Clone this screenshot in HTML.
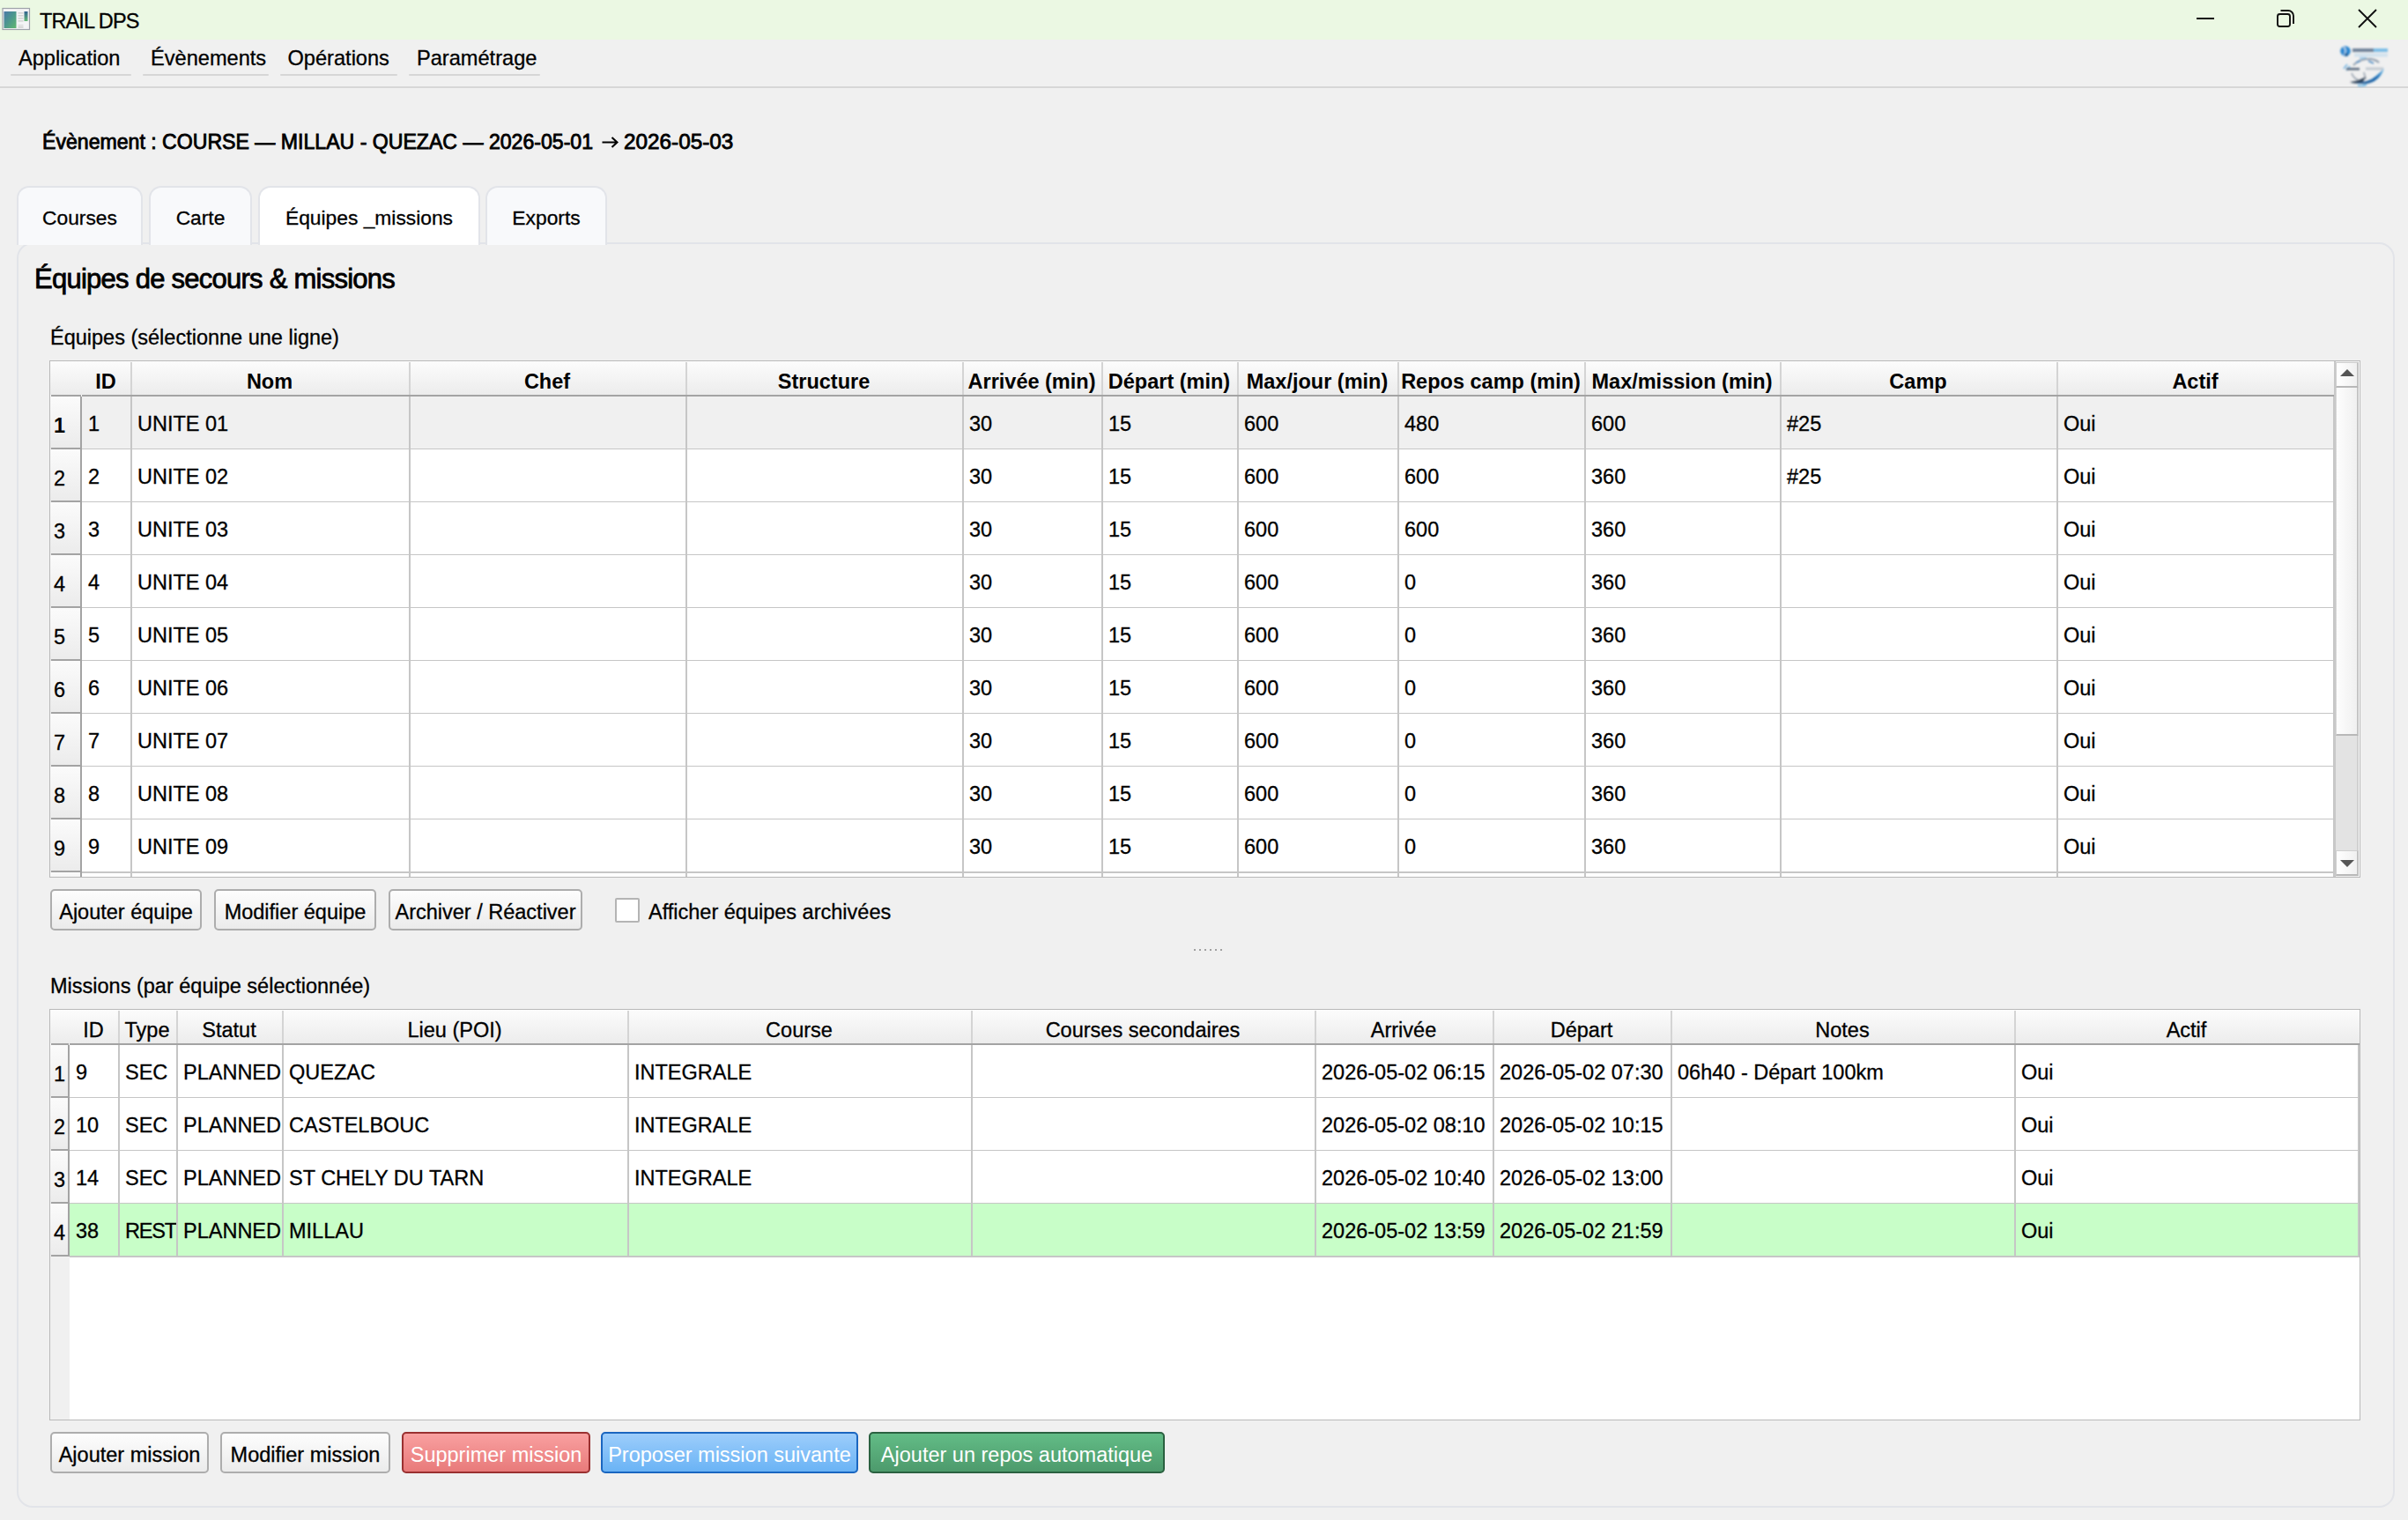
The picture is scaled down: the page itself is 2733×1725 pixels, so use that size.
<!DOCTYPE html>
<html><head><meta charset="utf-8"><title>TRAIL DPS</title>
<style>
html,body{margin:0;padding:0;}
body{width:2733px;height:1725px;overflow:hidden;background:#f0f0f0;position:relative;font-family:"Liberation Sans",sans-serif;}
.t{position:absolute;white-space:nowrap;line-height:1;-webkit-text-stroke-width:0.3px;}
.r{position:absolute;box-sizing:border-box;}
</style></head><body>

<div class="r" style="left:0px;top:0px;width:2733px;height:45px;background:#ebf8e3;"></div>
<svg style="position:absolute;left:2px;top:8px" width="33" height="27" viewBox="0 0 33 27">
<defs><linearGradient id="ig" x1="0" y1="0" x2="1" y2="1"><stop offset="0" stop-color="#4a78a8"/><stop offset="0.45" stop-color="#4b9590"/><stop offset="1" stop-color="#62b870"/></linearGradient>
<linearGradient id="ig2" x1="0" y1="0" x2="0" y2="1"><stop offset="0" stop-color="#2f6090"/><stop offset="1" stop-color="#66bb77"/></linearGradient></defs>
<rect x="1" y="1.5" width="30.5" height="24" fill="#f4f4f6" stroke="#9ea2aa" stroke-width="1.2"/>
<rect x="2.5" y="5" width="14" height="19" fill="url(#ig)"/>
<rect x="18.5" y="6" width="6" height="1.6" fill="#d4d4d4"/>
<rect x="18.5" y="9" width="6" height="1.6" fill="#d4d4d4"/>
<rect x="18.5" y="12" width="6" height="1.6" fill="#d4d4d4"/>
<rect x="18.5" y="15" width="6" height="1.6" fill="#d4d4d4"/>
<rect x="18.5" y="20" width="6" height="1.2" fill="#d8d8d8"/>
<rect x="18.5" y="22" width="6" height="1.6" fill="#d0d0d0"/>
<rect x="25.5" y="5" width="4" height="11" fill="url(#ig2)"/>
</svg>
<div class="t" style="left:45px;top:13.11px;font-size:23.5px;font-weight:400;color:#000;letter-spacing:-0.9px;">TRAIL DPS</div>
<svg style="position:absolute;left:2480px;top:0px" width="253" height="45" viewBox="0 0 253 45">
<rect x="13" y="20" width="20" height="2" fill="#111"/>
<rect x="105" y="16" width="14" height="14" rx="2.5" fill="none" stroke="#111" stroke-width="1.9"/>
<path d="M108.5 12 H117 A6 6 0 0 1 123 18 V27" fill="none" stroke="#111" stroke-width="1.9"/>
<path d="M197 11 L217 31 M217 11 L197 31" stroke="#111" stroke-width="1.9"/>
</svg>
<div class="t" style="left:21px;top:54.52px;font-size:23.6px;font-weight:400;color:#000;">Application</div>
<div class="r" style="left:12px;top:84px;width:137px;height:2px;background:#d6d6d6;border-radius:1px;"></div>
<div class="t" style="left:171px;top:54.52px;font-size:23.6px;font-weight:400;color:#000;">Évènements</div>
<div class="r" style="left:162px;top:84px;width:143px;height:2px;background:#d6d6d6;border-radius:1px;"></div>
<div class="t" style="left:326.5px;top:54.52px;font-size:23.6px;font-weight:400;color:#000;">Opérations</div>
<div class="r" style="left:318px;top:84px;width:133px;height:2px;background:#d6d6d6;border-radius:1px;"></div>
<div class="t" style="left:473px;top:54.52px;font-size:23.6px;font-weight:400;color:#000;">Paramétrage</div>
<div class="r" style="left:464px;top:84px;width:149px;height:2px;background:#d6d6d6;border-radius:1px;"></div>
<div class="r" style="left:0px;top:98px;width:2733px;height:2px;background:#d7d7d7;"></div>
<svg style="position:absolute;left:2650px;top:45px" width="70" height="55" viewBox="0 0 70 55">
<defs><filter id="bl" x="-20%" y="-20%" width="140%" height="140%"><feGaussianBlur stdDeviation="0.9"/></filter>
<linearGradient id="sw" x1="0" y1="1" x2="1" y2="0"><stop offset="0" stop-color="#1d4f86"/><stop offset="0.6" stop-color="#1f6fb8"/><stop offset="1" stop-color="#6cc4f0"/></linearGradient></defs>
<g filter="url(#bl)">
<circle cx="12" cy="13" r="5.8" fill="#2a88d0"/>
<path d="M10 8.5 q4 3 0.5 9" stroke="#d8ecf8" stroke-width="1.3" fill="none"/>
<circle cx="13" cy="17" r="2" fill="#1b5c95"/>
<rect x="20" y="10" width="24" height="4" fill="#71839a"/>
<rect x="44" y="10" width="16" height="4" fill="#7cbde6"/>
<rect x="22" y="15.5" width="38" height="4" fill="#d2e2ee"/>
<rect x="28" y="20" width="8" height="1.6" fill="#8cc4ea"/>
<path d="M21 29 q8 -8 20 -7 q6 1 9 4" stroke="#8a98a8" stroke-width="1.8" fill="none"/>
<path d="M24 26 l5 -2 M38 24 l6 3" stroke="#4a88c0" stroke-width="1.6"/>
<path d="M10 33 l4 -5 M13 35 l4 -5" stroke="#6aaee0" stroke-width="1.5"/>
<rect x="13" y="32" width="15" height="2.6" fill="#5a6a7e"/>
<rect x="35" y="31.5" width="20" height="3" fill="#c4cad2"/>
<path d="M19 38 q2 6 8 8 M33 37 l2 8" stroke="#9aa4b0" stroke-width="1.6" fill="none"/>
<path d="M17 48 q10 -1 18 -6 l-3 6 q-8 3 -15 0z" fill="#2f4256"/>
<path d="M22 49 q16 0 25 -8 q6 -5 9 -9 q-3 10 -11 15 q-8 5 -23 2z" fill="url(#sw)"/>
<path d="M26 52 q6 1 10 -1" stroke="#4aa6e0" stroke-width="1.4" fill="none"/>
</g>
</svg>
<div class="t" style="left:48px;top:150.45px;font-size:23.1px;font-weight:400;color:#000;-webkit-text-stroke:0.85px #000;">Évènement : COURSE — MILLAU - QUEZAC — 2026-05-01</div>
<svg style="position:absolute;left:683px;top:155px" width="19" height="13" viewBox="0 0 19 13"><path d="M0.5 6.5 H17 M11.5 1 L17.5 6.5 L11.5 12" fill="none" stroke="#000" stroke-width="2.1"/></svg>
<div class="t" style="left:708px;top:149.43px;font-size:24.3px;font-weight:400;color:#000;-webkit-text-stroke:0.85px #000;">2026-05-03</div>
<div class="r" style="left:19px;top:275px;width:2699px;height:1436px;border:2px solid #e2e4e9;border-radius:18px;background:#f0f0f0;"></div>
<div class="r" style="left:19px;top:211px;width:143px;height:67px;border:2px solid #e2e4e9;border-bottom:none;border-top-left-radius:14px;border-top-right-radius:14px;background:#f8f9fb;"></div>
<div class="t" style="left:19px;width:143px;text-align:center;top:236.20px;font-size:22.8px;font-weight:400;color:#000;">Courses</div>
<div class="r" style="left:169px;top:211px;width:117px;height:67px;border:2px solid #e2e4e9;border-bottom:none;border-top-left-radius:14px;border-top-right-radius:14px;background:#f8f9fb;"></div>
<div class="t" style="left:169px;width:117px;text-align:center;top:236.20px;font-size:22.8px;font-weight:400;color:#000;">Carte</div>
<div class="r" style="left:293px;top:211px;width:252px;height:67px;border:2px solid #e2e4e9;border-bottom:none;border-top-left-radius:14px;border-top-right-radius:14px;background:#ffffff;"></div>
<div class="t" style="left:293px;width:252px;text-align:center;top:236.20px;font-size:22.8px;font-weight:400;color:#000;">Équipes _missions</div>
<div class="r" style="left:551px;top:211px;width:138px;height:67px;border:2px solid #e2e4e9;border-bottom:none;border-top-left-radius:14px;border-top-right-radius:14px;background:#f8f9fb;"></div>
<div class="t" style="left:551px;width:138px;text-align:center;top:236.20px;font-size:22.8px;font-weight:400;color:#000;">Exports</div>
<div class="t" style="left:39px;top:301.26px;font-size:31px;font-weight:400;color:#000;-webkit-text-stroke:0.8px #000;letter-spacing:-0.75px;">Équipes de secours &amp; missions</div>
<div class="t" style="left:57px;top:371.61px;font-size:23.5px;font-weight:400;color:#000;">Équipes (sélectionne une ligne)</div>
<div class="r" style="left:56px;top:409px;width:2623px;height:587px;border:1px solid #b9b9b9;background:#ffffff;"></div>
<div class="r" style="left:57px;top:410px;width:2592px;height:38px;background:linear-gradient(#fcfcfc,#ececec);"></div>
<div class="r" style="left:58px;top:448px;width:34px;height:2px;background:#a3a3a3;"></div>
<div class="r" style="left:93px;top:448px;width:2556px;height:2px;background:#a3a3a3;"></div>
<div class="t" style="left:92px;width:56px;text-align:center;top:422.11px;font-size:23.5px;font-weight:700;color:#000;-webkit-text-stroke-width:0;">ID</div>
<div class="r" style="left:148px;top:411px;width:2px;height:37px;background:#d4d4d4;"></div>
<div class="t" style="left:148px;width:316px;text-align:center;top:422.11px;font-size:23.5px;font-weight:700;color:#000;-webkit-text-stroke-width:0;">Nom</div>
<div class="r" style="left:464px;top:411px;width:2px;height:37px;background:#d4d4d4;"></div>
<div class="t" style="left:464px;width:314px;text-align:center;top:422.11px;font-size:23.5px;font-weight:700;color:#000;-webkit-text-stroke-width:0;">Chef</div>
<div class="r" style="left:778px;top:411px;width:2px;height:37px;background:#d4d4d4;"></div>
<div class="t" style="left:778px;width:314px;text-align:center;top:422.11px;font-size:23.5px;font-weight:700;color:#000;-webkit-text-stroke-width:0;">Structure</div>
<div class="r" style="left:1092px;top:411px;width:2px;height:37px;background:#d4d4d4;"></div>
<div class="t" style="left:1092px;width:158px;text-align:center;top:422.11px;font-size:23.5px;font-weight:700;color:#000;-webkit-text-stroke-width:0;">Arrivée (min)</div>
<div class="r" style="left:1250px;top:411px;width:2px;height:37px;background:#d4d4d4;"></div>
<div class="t" style="left:1250px;width:154px;text-align:center;top:422.11px;font-size:23.5px;font-weight:700;color:#000;-webkit-text-stroke-width:0;">Départ (min)</div>
<div class="r" style="left:1404px;top:411px;width:2px;height:37px;background:#d4d4d4;"></div>
<div class="t" style="left:1404px;width:182px;text-align:center;top:422.11px;font-size:23.5px;font-weight:700;color:#000;-webkit-text-stroke-width:0;">Max/jour (min)</div>
<div class="r" style="left:1586px;top:411px;width:2px;height:37px;background:#d4d4d4;"></div>
<div class="t" style="left:1586px;width:212px;text-align:center;top:422.11px;font-size:23.5px;font-weight:700;color:#000;-webkit-text-stroke-width:0;">Repos camp (min)</div>
<div class="r" style="left:1798px;top:411px;width:2px;height:37px;background:#d4d4d4;"></div>
<div class="t" style="left:1798px;width:222px;text-align:center;top:422.11px;font-size:23.5px;font-weight:700;color:#000;-webkit-text-stroke-width:0;">Max/mission (min)</div>
<div class="r" style="left:2020px;top:411px;width:2px;height:37px;background:#d4d4d4;"></div>
<div class="t" style="left:2020px;width:314px;text-align:center;top:422.11px;font-size:23.5px;font-weight:700;color:#000;-webkit-text-stroke-width:0;">Camp</div>
<div class="r" style="left:2334px;top:411px;width:2px;height:37px;background:#d4d4d4;"></div>
<div class="t" style="left:2334px;width:315px;text-align:center;top:422.11px;font-size:23.5px;font-weight:700;color:#000;-webkit-text-stroke-width:0;">Actif</div>
<div class="r" style="left:93px;top:450px;width:2556px;height:60px;background:#f0f0f0;"></div>
<div class="r" style="left:57px;top:450px;width:35px;height:60px;background:linear-gradient(#fbfbfb,#ebebeb);"></div>
<div class="r" style="left:91px;top:450px;width:2px;height:60px;background:#a3a3a3;"></div>
<div class="r" style="left:58px;top:508px;width:34px;height:2px;background:#a3a3a3;"></div>
<div class="t" style="left:61px;top:472.11px;font-size:23.5px;font-weight:700;color:#000;-webkit-text-stroke-width:0;">1</div>
<div class="r" style="left:93px;top:509px;width:2556px;height:2px;background:#c6c6c6;"></div>
<div class="t" style="left:100px;top:470.11px;font-size:23.5px;font-weight:400;color:#000;">1</div>
<div class="t" style="left:156px;top:470.11px;font-size:23.5px;font-weight:400;color:#000;">UNITE 01</div>
<div class="t" style="left:1100px;top:470.11px;font-size:23.5px;font-weight:400;color:#000;">30</div>
<div class="t" style="left:1258px;top:470.11px;font-size:23.5px;font-weight:400;color:#000;">15</div>
<div class="t" style="left:1412px;top:470.11px;font-size:23.5px;font-weight:400;color:#000;">600</div>
<div class="t" style="left:1594px;top:470.11px;font-size:23.5px;font-weight:400;color:#000;">480</div>
<div class="t" style="left:1806px;top:470.11px;font-size:23.5px;font-weight:400;color:#000;">600</div>
<div class="t" style="left:2028px;top:470.11px;font-size:23.5px;font-weight:400;color:#000;">#25</div>
<div class="t" style="left:2342px;top:470.11px;font-size:23.5px;font-weight:400;color:#000;">Oui</div>
<div class="r" style="left:93px;top:510px;width:2556px;height:60px;background:#ffffff;"></div>
<div class="r" style="left:57px;top:510px;width:35px;height:60px;background:linear-gradient(#fbfbfb,#ebebeb);"></div>
<div class="r" style="left:91px;top:510px;width:2px;height:60px;background:#a3a3a3;"></div>
<div class="r" style="left:58px;top:568px;width:34px;height:2px;background:#a3a3a3;"></div>
<div class="t" style="left:61px;top:532.11px;font-size:23.5px;font-weight:400;color:#000;">2</div>
<div class="r" style="left:93px;top:569px;width:2556px;height:2px;background:#c6c6c6;"></div>
<div class="t" style="left:100px;top:530.11px;font-size:23.5px;font-weight:400;color:#000;">2</div>
<div class="t" style="left:156px;top:530.11px;font-size:23.5px;font-weight:400;color:#000;">UNITE 02</div>
<div class="t" style="left:1100px;top:530.11px;font-size:23.5px;font-weight:400;color:#000;">30</div>
<div class="t" style="left:1258px;top:530.11px;font-size:23.5px;font-weight:400;color:#000;">15</div>
<div class="t" style="left:1412px;top:530.11px;font-size:23.5px;font-weight:400;color:#000;">600</div>
<div class="t" style="left:1594px;top:530.11px;font-size:23.5px;font-weight:400;color:#000;">600</div>
<div class="t" style="left:1806px;top:530.11px;font-size:23.5px;font-weight:400;color:#000;">360</div>
<div class="t" style="left:2028px;top:530.11px;font-size:23.5px;font-weight:400;color:#000;">#25</div>
<div class="t" style="left:2342px;top:530.11px;font-size:23.5px;font-weight:400;color:#000;">Oui</div>
<div class="r" style="left:93px;top:570px;width:2556px;height:60px;background:#ffffff;"></div>
<div class="r" style="left:57px;top:570px;width:35px;height:60px;background:linear-gradient(#fbfbfb,#ebebeb);"></div>
<div class="r" style="left:91px;top:570px;width:2px;height:60px;background:#a3a3a3;"></div>
<div class="r" style="left:58px;top:628px;width:34px;height:2px;background:#a3a3a3;"></div>
<div class="t" style="left:61px;top:592.11px;font-size:23.5px;font-weight:400;color:#000;">3</div>
<div class="r" style="left:93px;top:629px;width:2556px;height:2px;background:#c6c6c6;"></div>
<div class="t" style="left:100px;top:590.11px;font-size:23.5px;font-weight:400;color:#000;">3</div>
<div class="t" style="left:156px;top:590.11px;font-size:23.5px;font-weight:400;color:#000;">UNITE 03</div>
<div class="t" style="left:1100px;top:590.11px;font-size:23.5px;font-weight:400;color:#000;">30</div>
<div class="t" style="left:1258px;top:590.11px;font-size:23.5px;font-weight:400;color:#000;">15</div>
<div class="t" style="left:1412px;top:590.11px;font-size:23.5px;font-weight:400;color:#000;">600</div>
<div class="t" style="left:1594px;top:590.11px;font-size:23.5px;font-weight:400;color:#000;">600</div>
<div class="t" style="left:1806px;top:590.11px;font-size:23.5px;font-weight:400;color:#000;">360</div>
<div class="t" style="left:2342px;top:590.11px;font-size:23.5px;font-weight:400;color:#000;">Oui</div>
<div class="r" style="left:93px;top:630px;width:2556px;height:60px;background:#ffffff;"></div>
<div class="r" style="left:57px;top:630px;width:35px;height:60px;background:linear-gradient(#fbfbfb,#ebebeb);"></div>
<div class="r" style="left:91px;top:630px;width:2px;height:60px;background:#a3a3a3;"></div>
<div class="r" style="left:58px;top:688px;width:34px;height:2px;background:#a3a3a3;"></div>
<div class="t" style="left:61px;top:652.11px;font-size:23.5px;font-weight:400;color:#000;">4</div>
<div class="r" style="left:93px;top:689px;width:2556px;height:2px;background:#c6c6c6;"></div>
<div class="t" style="left:100px;top:650.11px;font-size:23.5px;font-weight:400;color:#000;">4</div>
<div class="t" style="left:156px;top:650.11px;font-size:23.5px;font-weight:400;color:#000;">UNITE 04</div>
<div class="t" style="left:1100px;top:650.11px;font-size:23.5px;font-weight:400;color:#000;">30</div>
<div class="t" style="left:1258px;top:650.11px;font-size:23.5px;font-weight:400;color:#000;">15</div>
<div class="t" style="left:1412px;top:650.11px;font-size:23.5px;font-weight:400;color:#000;">600</div>
<div class="t" style="left:1594px;top:650.11px;font-size:23.5px;font-weight:400;color:#000;">0</div>
<div class="t" style="left:1806px;top:650.11px;font-size:23.5px;font-weight:400;color:#000;">360</div>
<div class="t" style="left:2342px;top:650.11px;font-size:23.5px;font-weight:400;color:#000;">Oui</div>
<div class="r" style="left:93px;top:690px;width:2556px;height:60px;background:#ffffff;"></div>
<div class="r" style="left:57px;top:690px;width:35px;height:60px;background:linear-gradient(#fbfbfb,#ebebeb);"></div>
<div class="r" style="left:91px;top:690px;width:2px;height:60px;background:#a3a3a3;"></div>
<div class="r" style="left:58px;top:748px;width:34px;height:2px;background:#a3a3a3;"></div>
<div class="t" style="left:61px;top:712.11px;font-size:23.5px;font-weight:400;color:#000;">5</div>
<div class="r" style="left:93px;top:749px;width:2556px;height:2px;background:#c6c6c6;"></div>
<div class="t" style="left:100px;top:710.11px;font-size:23.5px;font-weight:400;color:#000;">5</div>
<div class="t" style="left:156px;top:710.11px;font-size:23.5px;font-weight:400;color:#000;">UNITE 05</div>
<div class="t" style="left:1100px;top:710.11px;font-size:23.5px;font-weight:400;color:#000;">30</div>
<div class="t" style="left:1258px;top:710.11px;font-size:23.5px;font-weight:400;color:#000;">15</div>
<div class="t" style="left:1412px;top:710.11px;font-size:23.5px;font-weight:400;color:#000;">600</div>
<div class="t" style="left:1594px;top:710.11px;font-size:23.5px;font-weight:400;color:#000;">0</div>
<div class="t" style="left:1806px;top:710.11px;font-size:23.5px;font-weight:400;color:#000;">360</div>
<div class="t" style="left:2342px;top:710.11px;font-size:23.5px;font-weight:400;color:#000;">Oui</div>
<div class="r" style="left:93px;top:750px;width:2556px;height:60px;background:#ffffff;"></div>
<div class="r" style="left:57px;top:750px;width:35px;height:60px;background:linear-gradient(#fbfbfb,#ebebeb);"></div>
<div class="r" style="left:91px;top:750px;width:2px;height:60px;background:#a3a3a3;"></div>
<div class="r" style="left:58px;top:808px;width:34px;height:2px;background:#a3a3a3;"></div>
<div class="t" style="left:61px;top:772.11px;font-size:23.5px;font-weight:400;color:#000;">6</div>
<div class="r" style="left:93px;top:809px;width:2556px;height:2px;background:#c6c6c6;"></div>
<div class="t" style="left:100px;top:770.11px;font-size:23.5px;font-weight:400;color:#000;">6</div>
<div class="t" style="left:156px;top:770.11px;font-size:23.5px;font-weight:400;color:#000;">UNITE 06</div>
<div class="t" style="left:1100px;top:770.11px;font-size:23.5px;font-weight:400;color:#000;">30</div>
<div class="t" style="left:1258px;top:770.11px;font-size:23.5px;font-weight:400;color:#000;">15</div>
<div class="t" style="left:1412px;top:770.11px;font-size:23.5px;font-weight:400;color:#000;">600</div>
<div class="t" style="left:1594px;top:770.11px;font-size:23.5px;font-weight:400;color:#000;">0</div>
<div class="t" style="left:1806px;top:770.11px;font-size:23.5px;font-weight:400;color:#000;">360</div>
<div class="t" style="left:2342px;top:770.11px;font-size:23.5px;font-weight:400;color:#000;">Oui</div>
<div class="r" style="left:93px;top:810px;width:2556px;height:60px;background:#ffffff;"></div>
<div class="r" style="left:57px;top:810px;width:35px;height:60px;background:linear-gradient(#fbfbfb,#ebebeb);"></div>
<div class="r" style="left:91px;top:810px;width:2px;height:60px;background:#a3a3a3;"></div>
<div class="r" style="left:58px;top:868px;width:34px;height:2px;background:#a3a3a3;"></div>
<div class="t" style="left:61px;top:832.11px;font-size:23.5px;font-weight:400;color:#000;">7</div>
<div class="r" style="left:93px;top:869px;width:2556px;height:2px;background:#c6c6c6;"></div>
<div class="t" style="left:100px;top:830.11px;font-size:23.5px;font-weight:400;color:#000;">7</div>
<div class="t" style="left:156px;top:830.11px;font-size:23.5px;font-weight:400;color:#000;">UNITE 07</div>
<div class="t" style="left:1100px;top:830.11px;font-size:23.5px;font-weight:400;color:#000;">30</div>
<div class="t" style="left:1258px;top:830.11px;font-size:23.5px;font-weight:400;color:#000;">15</div>
<div class="t" style="left:1412px;top:830.11px;font-size:23.5px;font-weight:400;color:#000;">600</div>
<div class="t" style="left:1594px;top:830.11px;font-size:23.5px;font-weight:400;color:#000;">0</div>
<div class="t" style="left:1806px;top:830.11px;font-size:23.5px;font-weight:400;color:#000;">360</div>
<div class="t" style="left:2342px;top:830.11px;font-size:23.5px;font-weight:400;color:#000;">Oui</div>
<div class="r" style="left:93px;top:870px;width:2556px;height:60px;background:#ffffff;"></div>
<div class="r" style="left:57px;top:870px;width:35px;height:60px;background:linear-gradient(#fbfbfb,#ebebeb);"></div>
<div class="r" style="left:91px;top:870px;width:2px;height:60px;background:#a3a3a3;"></div>
<div class="r" style="left:58px;top:928px;width:34px;height:2px;background:#a3a3a3;"></div>
<div class="t" style="left:61px;top:892.11px;font-size:23.5px;font-weight:400;color:#000;">8</div>
<div class="r" style="left:93px;top:929px;width:2556px;height:2px;background:#c6c6c6;"></div>
<div class="t" style="left:100px;top:890.11px;font-size:23.5px;font-weight:400;color:#000;">8</div>
<div class="t" style="left:156px;top:890.11px;font-size:23.5px;font-weight:400;color:#000;">UNITE 08</div>
<div class="t" style="left:1100px;top:890.11px;font-size:23.5px;font-weight:400;color:#000;">30</div>
<div class="t" style="left:1258px;top:890.11px;font-size:23.5px;font-weight:400;color:#000;">15</div>
<div class="t" style="left:1412px;top:890.11px;font-size:23.5px;font-weight:400;color:#000;">600</div>
<div class="t" style="left:1594px;top:890.11px;font-size:23.5px;font-weight:400;color:#000;">0</div>
<div class="t" style="left:1806px;top:890.11px;font-size:23.5px;font-weight:400;color:#000;">360</div>
<div class="t" style="left:2342px;top:890.11px;font-size:23.5px;font-weight:400;color:#000;">Oui</div>
<div class="r" style="left:93px;top:930px;width:2556px;height:60px;background:#ffffff;"></div>
<div class="r" style="left:57px;top:930px;width:35px;height:60px;background:linear-gradient(#fbfbfb,#ebebeb);"></div>
<div class="r" style="left:91px;top:930px;width:2px;height:60px;background:#a3a3a3;"></div>
<div class="r" style="left:58px;top:988px;width:34px;height:2px;background:#a3a3a3;"></div>
<div class="t" style="left:61px;top:952.11px;font-size:23.5px;font-weight:400;color:#000;">9</div>
<div class="r" style="left:93px;top:989px;width:2556px;height:2px;background:#c6c6c6;"></div>
<div class="t" style="left:100px;top:950.11px;font-size:23.5px;font-weight:400;color:#000;">9</div>
<div class="t" style="left:156px;top:950.11px;font-size:23.5px;font-weight:400;color:#000;">UNITE 09</div>
<div class="t" style="left:1100px;top:950.11px;font-size:23.5px;font-weight:400;color:#000;">30</div>
<div class="t" style="left:1258px;top:950.11px;font-size:23.5px;font-weight:400;color:#000;">15</div>
<div class="t" style="left:1412px;top:950.11px;font-size:23.5px;font-weight:400;color:#000;">600</div>
<div class="t" style="left:1594px;top:950.11px;font-size:23.5px;font-weight:400;color:#000;">0</div>
<div class="t" style="left:1806px;top:950.11px;font-size:23.5px;font-weight:400;color:#000;">360</div>
<div class="t" style="left:2342px;top:950.11px;font-size:23.5px;font-weight:400;color:#000;">Oui</div>
<div class="r" style="left:148px;top:450px;width:2px;height:545px;background:#c6c6c6;"></div>
<div class="r" style="left:464px;top:450px;width:2px;height:545px;background:#c6c6c6;"></div>
<div class="r" style="left:778px;top:450px;width:2px;height:545px;background:#c6c6c6;"></div>
<div class="r" style="left:1092px;top:450px;width:2px;height:545px;background:#c6c6c6;"></div>
<div class="r" style="left:1250px;top:450px;width:2px;height:545px;background:#c6c6c6;"></div>
<div class="r" style="left:1404px;top:450px;width:2px;height:545px;background:#c6c6c6;"></div>
<div class="r" style="left:1586px;top:450px;width:2px;height:545px;background:#c6c6c6;"></div>
<div class="r" style="left:1798px;top:450px;width:2px;height:545px;background:#c6c6c6;"></div>
<div class="r" style="left:2020px;top:450px;width:2px;height:545px;background:#c6c6c6;"></div>
<div class="r" style="left:2334px;top:450px;width:2px;height:545px;background:#c6c6c6;"></div>
<div class="r" style="left:2648px;top:450px;width:2px;height:545px;background:#c6c6c6;"></div>
<div class="r" style="left:57px;top:990px;width:35px;height:5px;background:linear-gradient(#fbfbfb,#f5f5f5);"></div>
<div class="r" style="left:91px;top:990px;width:2px;height:5px;background:#a3a3a3;"></div>
<div class="r" style="left:2649px;top:410px;width:28px;height:585px;background:#f0f0f0;border-left:2px solid #c8c8c8;"></div>
<div class="r" style="left:2651px;top:411px;width:26px;height:29px;background:linear-gradient(90deg,#ffffff,#f0f0f0);border:1px solid #cfcfcf;border-right:2px solid #c2c2c2;border-bottom:2px solid #b8b8b8;"></div>
<svg style="position:absolute;left:2656px;top:419px" width="16" height="8"><path d="M0 8 L8 0 L16 8z" fill="#555"/></svg>
<div class="r" style="left:2651px;top:440px;width:26px;height:395px;background:linear-gradient(90deg,#fdfdfd,#f0f0f0);border-right:2px solid #c4c4c4;border-bottom:2px solid #b8b8b8;border-left:1px solid #d8d8d8;"></div>
<div class="r" style="left:2651px;top:835px;width:26px;height:130px;background:#e3e3e3;border-right:2px solid #d0d0d0;"></div>
<div class="r" style="left:2651px;top:965px;width:26px;height:29px;background:linear-gradient(90deg,#ffffff,#f0f0f0);border:1px solid #cfcfcf;border-right:2px solid #c2c2c2;border-bottom:2px solid #b8b8b8;"></div>
<svg style="position:absolute;left:2656px;top:976px" width="16" height="8"><path d="M0 0 L16 0 L8 8z" fill="#555"/></svg>

<div class="r" style="left:57px;top:1009px;width:172px;height:47px;background:linear-gradient(#fdfdfd,#ebebeb);border:2px solid #adadad;border-radius:5px;"></div>
<div class="t" style="left:57px;width:172px;text-align:center;top:1024.11px;font-size:23.5px;font-weight:400;color:#000;">Ajouter équipe</div>
<div class="r" style="left:243px;top:1009px;width:184px;height:47px;background:linear-gradient(#fdfdfd,#ebebeb);border:2px solid #adadad;border-radius:5px;"></div>
<div class="t" style="left:243px;width:184px;text-align:center;top:1024.11px;font-size:23.5px;font-weight:400;color:#000;">Modifier équipe</div>
<div class="r" style="left:441px;top:1009px;width:220px;height:47px;background:linear-gradient(#fdfdfd,#ebebeb);border:2px solid #adadad;border-radius:5px;"></div>
<div class="t" style="left:441px;width:220px;text-align:center;top:1024.11px;font-size:23.5px;font-weight:400;color:#000;">Archiver / Réactiver</div>
<div class="r" style="left:698px;top:1019px;width:28px;height:28px;background:#fff;border:2px solid #b4b4b4;border-radius:2px;"></div>
<div class="t" style="left:736px;top:1024.11px;font-size:23.5px;font-weight:400;color:#000;">Afficher équipes archivées</div>
<div class="r" style="left:1355px;top:1077px;width:2px;height:2px;background:#a0a0a0;"></div>
<div class="r" style="left:1361px;top:1077px;width:2px;height:2px;background:#a0a0a0;"></div>
<div class="r" style="left:1367px;top:1077px;width:2px;height:2px;background:#a0a0a0;"></div>
<div class="r" style="left:1373px;top:1077px;width:2px;height:2px;background:#a0a0a0;"></div>
<div class="r" style="left:1379px;top:1077px;width:2px;height:2px;background:#a0a0a0;"></div>
<div class="r" style="left:1385px;top:1077px;width:2px;height:2px;background:#a0a0a0;"></div>
<div class="t" style="left:57px;top:1108.11px;font-size:23.5px;font-weight:400;color:#000;">Missions (par équipe sélectionnée)</div>
<div class="r" style="left:56px;top:1145px;width:2623px;height:467px;border:1px solid #b9b9b9;background:#ffffff;"></div>
<div class="r" style="left:57px;top:1146px;width:2621px;height:38px;background:linear-gradient(#fcfcfc,#ececec);"></div>
<div class="r" style="left:58px;top:1184px;width:20px;height:2px;background:#a3a3a3;"></div>
<div class="r" style="left:79px;top:1184px;width:2599px;height:2px;background:#a3a3a3;"></div>
<div class="t" style="left:78px;width:56px;text-align:center;top:1158.11px;font-size:23.5px;font-weight:400;color:#000;">ID</div>
<div class="r" style="left:134px;top:1147px;width:2px;height:37px;background:#d4d4d4;"></div>
<div class="t" style="left:134px;width:66px;text-align:center;top:1158.11px;font-size:23.5px;font-weight:400;color:#000;">Type</div>
<div class="r" style="left:200px;top:1147px;width:2px;height:37px;background:#d4d4d4;"></div>
<div class="t" style="left:200px;width:120px;text-align:center;top:1158.11px;font-size:23.5px;font-weight:400;color:#000;">Statut</div>
<div class="r" style="left:320px;top:1147px;width:2px;height:37px;background:#d4d4d4;"></div>
<div class="t" style="left:320px;width:392px;text-align:center;top:1158.11px;font-size:23.5px;font-weight:400;color:#000;">Lieu (POI)</div>
<div class="r" style="left:712px;top:1147px;width:2px;height:37px;background:#d4d4d4;"></div>
<div class="t" style="left:712px;width:390px;text-align:center;top:1158.11px;font-size:23.5px;font-weight:400;color:#000;">Course</div>
<div class="r" style="left:1102px;top:1147px;width:2px;height:37px;background:#d4d4d4;"></div>
<div class="t" style="left:1102px;width:390px;text-align:center;top:1158.11px;font-size:23.5px;font-weight:400;color:#000;">Courses secondaires</div>
<div class="r" style="left:1492px;top:1147px;width:2px;height:37px;background:#d4d4d4;"></div>
<div class="t" style="left:1492px;width:202px;text-align:center;top:1158.11px;font-size:23.5px;font-weight:400;color:#000;">Arrivée</div>
<div class="r" style="left:1694px;top:1147px;width:2px;height:37px;background:#d4d4d4;"></div>
<div class="t" style="left:1694px;width:202px;text-align:center;top:1158.11px;font-size:23.5px;font-weight:400;color:#000;">Départ</div>
<div class="r" style="left:1896px;top:1147px;width:2px;height:37px;background:#d4d4d4;"></div>
<div class="t" style="left:1896px;width:390px;text-align:center;top:1158.11px;font-size:23.5px;font-weight:400;color:#000;">Notes</div>
<div class="r" style="left:2286px;top:1147px;width:2px;height:37px;background:#d4d4d4;"></div>
<div class="t" style="left:2286px;width:391px;text-align:center;top:1158.11px;font-size:23.5px;font-weight:400;color:#000;">Actif</div>
<div class="r" style="left:79px;top:1186px;width:2599px;height:60px;background:#ffffff;"></div>
<div class="r" style="left:57px;top:1186px;width:21px;height:60px;background:linear-gradient(#fbfbfb,#ebebeb);"></div>
<div class="r" style="left:77px;top:1186px;width:2px;height:60px;background:#a3a3a3;"></div>
<div class="r" style="left:58px;top:1244px;width:20px;height:2px;background:#a3a3a3;"></div>
<div class="t" style="left:61px;top:1208.11px;font-size:23.5px;font-weight:400;color:#000;">1</div>
<div class="r" style="left:79px;top:1245px;width:2599px;height:2px;background:#c6c6c6;"></div>
<div class="t" style="left:86px;top:1206.11px;font-size:23.5px;font-weight:400;color:#000;">9</div>
<div class="t" style="left:142px;top:1206.11px;font-size:23.5px;font-weight:400;color:#000;">SEC</div>
<div class="t" style="left:208px;top:1206.11px;font-size:23.5px;font-weight:400;color:#000;">PLANNED</div>
<div class="t" style="left:328px;top:1206.11px;font-size:23.5px;font-weight:400;color:#000;">QUEZAC</div>
<div class="t" style="left:720px;top:1206.11px;font-size:23.5px;font-weight:400;color:#000;">INTEGRALE</div>
<div class="t" style="left:1500px;top:1206.11px;font-size:23.5px;font-weight:400;color:#000;">2026-05-02 06:15</div>
<div class="t" style="left:1702px;top:1206.11px;font-size:23.5px;font-weight:400;color:#000;">2026-05-02 07:30</div>
<div class="t" style="left:1904px;top:1206.11px;font-size:23.5px;font-weight:400;color:#000;">06h40 - Départ 100km</div>
<div class="t" style="left:2294px;top:1206.11px;font-size:23.5px;font-weight:400;color:#000;">Oui</div>
<div class="r" style="left:79px;top:1246px;width:2599px;height:60px;background:#ffffff;"></div>
<div class="r" style="left:57px;top:1246px;width:21px;height:60px;background:linear-gradient(#fbfbfb,#ebebeb);"></div>
<div class="r" style="left:77px;top:1246px;width:2px;height:60px;background:#a3a3a3;"></div>
<div class="r" style="left:58px;top:1304px;width:20px;height:2px;background:#a3a3a3;"></div>
<div class="t" style="left:61px;top:1268.11px;font-size:23.5px;font-weight:400;color:#000;">2</div>
<div class="r" style="left:79px;top:1305px;width:2599px;height:2px;background:#c6c6c6;"></div>
<div class="t" style="left:86px;top:1266.11px;font-size:23.5px;font-weight:400;color:#000;">10</div>
<div class="t" style="left:142px;top:1266.11px;font-size:23.5px;font-weight:400;color:#000;">SEC</div>
<div class="t" style="left:208px;top:1266.11px;font-size:23.5px;font-weight:400;color:#000;">PLANNED</div>
<div class="t" style="left:328px;top:1266.11px;font-size:23.5px;font-weight:400;color:#000;">CASTELBOUC</div>
<div class="t" style="left:720px;top:1266.11px;font-size:23.5px;font-weight:400;color:#000;">INTEGRALE</div>
<div class="t" style="left:1500px;top:1266.11px;font-size:23.5px;font-weight:400;color:#000;">2026-05-02 08:10</div>
<div class="t" style="left:1702px;top:1266.11px;font-size:23.5px;font-weight:400;color:#000;">2026-05-02 10:15</div>
<div class="t" style="left:2294px;top:1266.11px;font-size:23.5px;font-weight:400;color:#000;">Oui</div>
<div class="r" style="left:79px;top:1306px;width:2599px;height:60px;background:#ffffff;"></div>
<div class="r" style="left:57px;top:1306px;width:21px;height:60px;background:linear-gradient(#fbfbfb,#ebebeb);"></div>
<div class="r" style="left:77px;top:1306px;width:2px;height:60px;background:#a3a3a3;"></div>
<div class="r" style="left:58px;top:1364px;width:20px;height:2px;background:#a3a3a3;"></div>
<div class="t" style="left:61px;top:1328.11px;font-size:23.5px;font-weight:400;color:#000;">3</div>
<div class="r" style="left:79px;top:1365px;width:2599px;height:2px;background:#c6c6c6;"></div>
<div class="t" style="left:86px;top:1326.11px;font-size:23.5px;font-weight:400;color:#000;">14</div>
<div class="t" style="left:142px;top:1326.11px;font-size:23.5px;font-weight:400;color:#000;">SEC</div>
<div class="t" style="left:208px;top:1326.11px;font-size:23.5px;font-weight:400;color:#000;">PLANNED</div>
<div class="t" style="left:328px;top:1326.11px;font-size:23.5px;font-weight:400;color:#000;">ST CHELY DU TARN</div>
<div class="t" style="left:720px;top:1326.11px;font-size:23.5px;font-weight:400;color:#000;">INTEGRALE</div>
<div class="t" style="left:1500px;top:1326.11px;font-size:23.5px;font-weight:400;color:#000;">2026-05-02 10:40</div>
<div class="t" style="left:1702px;top:1326.11px;font-size:23.5px;font-weight:400;color:#000;">2026-05-02 13:00</div>
<div class="t" style="left:2294px;top:1326.11px;font-size:23.5px;font-weight:400;color:#000;">Oui</div>
<div class="r" style="left:79px;top:1366px;width:2599px;height:60px;background:#c8fec8;"></div>
<div class="r" style="left:57px;top:1366px;width:21px;height:60px;background:linear-gradient(#fbfbfb,#ebebeb);"></div>
<div class="r" style="left:77px;top:1366px;width:2px;height:60px;background:#a3a3a3;"></div>
<div class="r" style="left:58px;top:1424px;width:20px;height:2px;background:#a3a3a3;"></div>
<div class="t" style="left:61px;top:1388.11px;font-size:23.5px;font-weight:400;color:#000;">4</div>
<div class="r" style="left:79px;top:1425px;width:2599px;height:2px;background:#c6c6c6;"></div>
<div class="t" style="left:86px;top:1386.11px;font-size:23.5px;font-weight:400;color:#000;">38</div>
<div class="t" style="left:142px;top:1386.11px;font-size:23.5px;font-weight:400;color:#000;letter-spacing:-1.2px;">REST</div>
<div class="t" style="left:208px;top:1386.11px;font-size:23.5px;font-weight:400;color:#000;">PLANNED</div>
<div class="t" style="left:328px;top:1386.11px;font-size:23.5px;font-weight:400;color:#000;">MILLAU</div>
<div class="t" style="left:1500px;top:1386.11px;font-size:23.5px;font-weight:400;color:#000;">2026-05-02 13:59</div>
<div class="t" style="left:1702px;top:1386.11px;font-size:23.5px;font-weight:400;color:#000;">2026-05-02 21:59</div>
<div class="t" style="left:2294px;top:1386.11px;font-size:23.5px;font-weight:400;color:#000;">Oui</div>
<div class="r" style="left:134px;top:1186px;width:2px;height:240px;background:#c6c6c6;"></div>
<div class="r" style="left:200px;top:1186px;width:2px;height:240px;background:#c6c6c6;"></div>
<div class="r" style="left:320px;top:1186px;width:2px;height:240px;background:#c6c6c6;"></div>
<div class="r" style="left:712px;top:1186px;width:2px;height:240px;background:#c6c6c6;"></div>
<div class="r" style="left:1102px;top:1186px;width:2px;height:240px;background:#c6c6c6;"></div>
<div class="r" style="left:1492px;top:1186px;width:2px;height:240px;background:#c6c6c6;"></div>
<div class="r" style="left:1694px;top:1186px;width:2px;height:240px;background:#c6c6c6;"></div>
<div class="r" style="left:1896px;top:1186px;width:2px;height:240px;background:#c6c6c6;"></div>
<div class="r" style="left:2286px;top:1186px;width:2px;height:240px;background:#c6c6c6;"></div>
<div class="r" style="left:2676px;top:1186px;width:2px;height:240px;background:#c6c6c6;"></div>
<div class="r" style="left:57px;top:1426px;width:22px;height:185px;background:#f0f0f0;"></div>
<div class="r" style="left:57px;top:1625px;width:180px;height:47px;background:linear-gradient(#fdfdfd,#ebebeb);border:2px solid #adadad;border-radius:5px;"></div>
<div class="t" style="left:57px;width:180px;text-align:center;top:1640.11px;font-size:23.5px;font-weight:400;color:#000;">Ajouter mission</div>
<div class="r" style="left:250px;top:1625px;width:193px;height:47px;background:linear-gradient(#fdfdfd,#ebebeb);border:2px solid #adadad;border-radius:5px;"></div>
<div class="t" style="left:250px;width:193px;text-align:center;top:1640.11px;font-size:23.5px;font-weight:400;color:#000;">Modifier mission</div>
<div class="r" style="left:456px;top:1625px;width:214px;height:47px;background:linear-gradient(#f9a0a0,#e87a7a);border:2px solid #9a3030;border-radius:5px;"></div>
<div class="t" style="left:456px;width:214px;text-align:center;top:1640.11px;font-size:23.5px;font-weight:400;color:#fff;-webkit-text-stroke-width:0;">Supprimer mission</div>
<div class="r" style="left:682px;top:1625px;width:292px;height:47px;background:linear-gradient(#9ccdfb,#6ab3f5);border:2px solid #1a66c0;border-radius:5px;"></div>
<div class="t" style="left:682px;width:292px;text-align:center;top:1640.11px;font-size:23.5px;font-weight:400;color:#fff;-webkit-text-stroke-width:0;">Proposer mission suivante</div>
<div class="r" style="left:986px;top:1625px;width:336px;height:47px;background:linear-gradient(#62bc86,#4d9a6c);border:2px solid #2a6140;border-radius:5px;"></div>
<div class="t" style="left:986px;width:336px;text-align:center;top:1640.11px;font-size:23.5px;font-weight:400;color:#fff;-webkit-text-stroke-width:0;">Ajouter un repos automatique</div>
</body></html>
